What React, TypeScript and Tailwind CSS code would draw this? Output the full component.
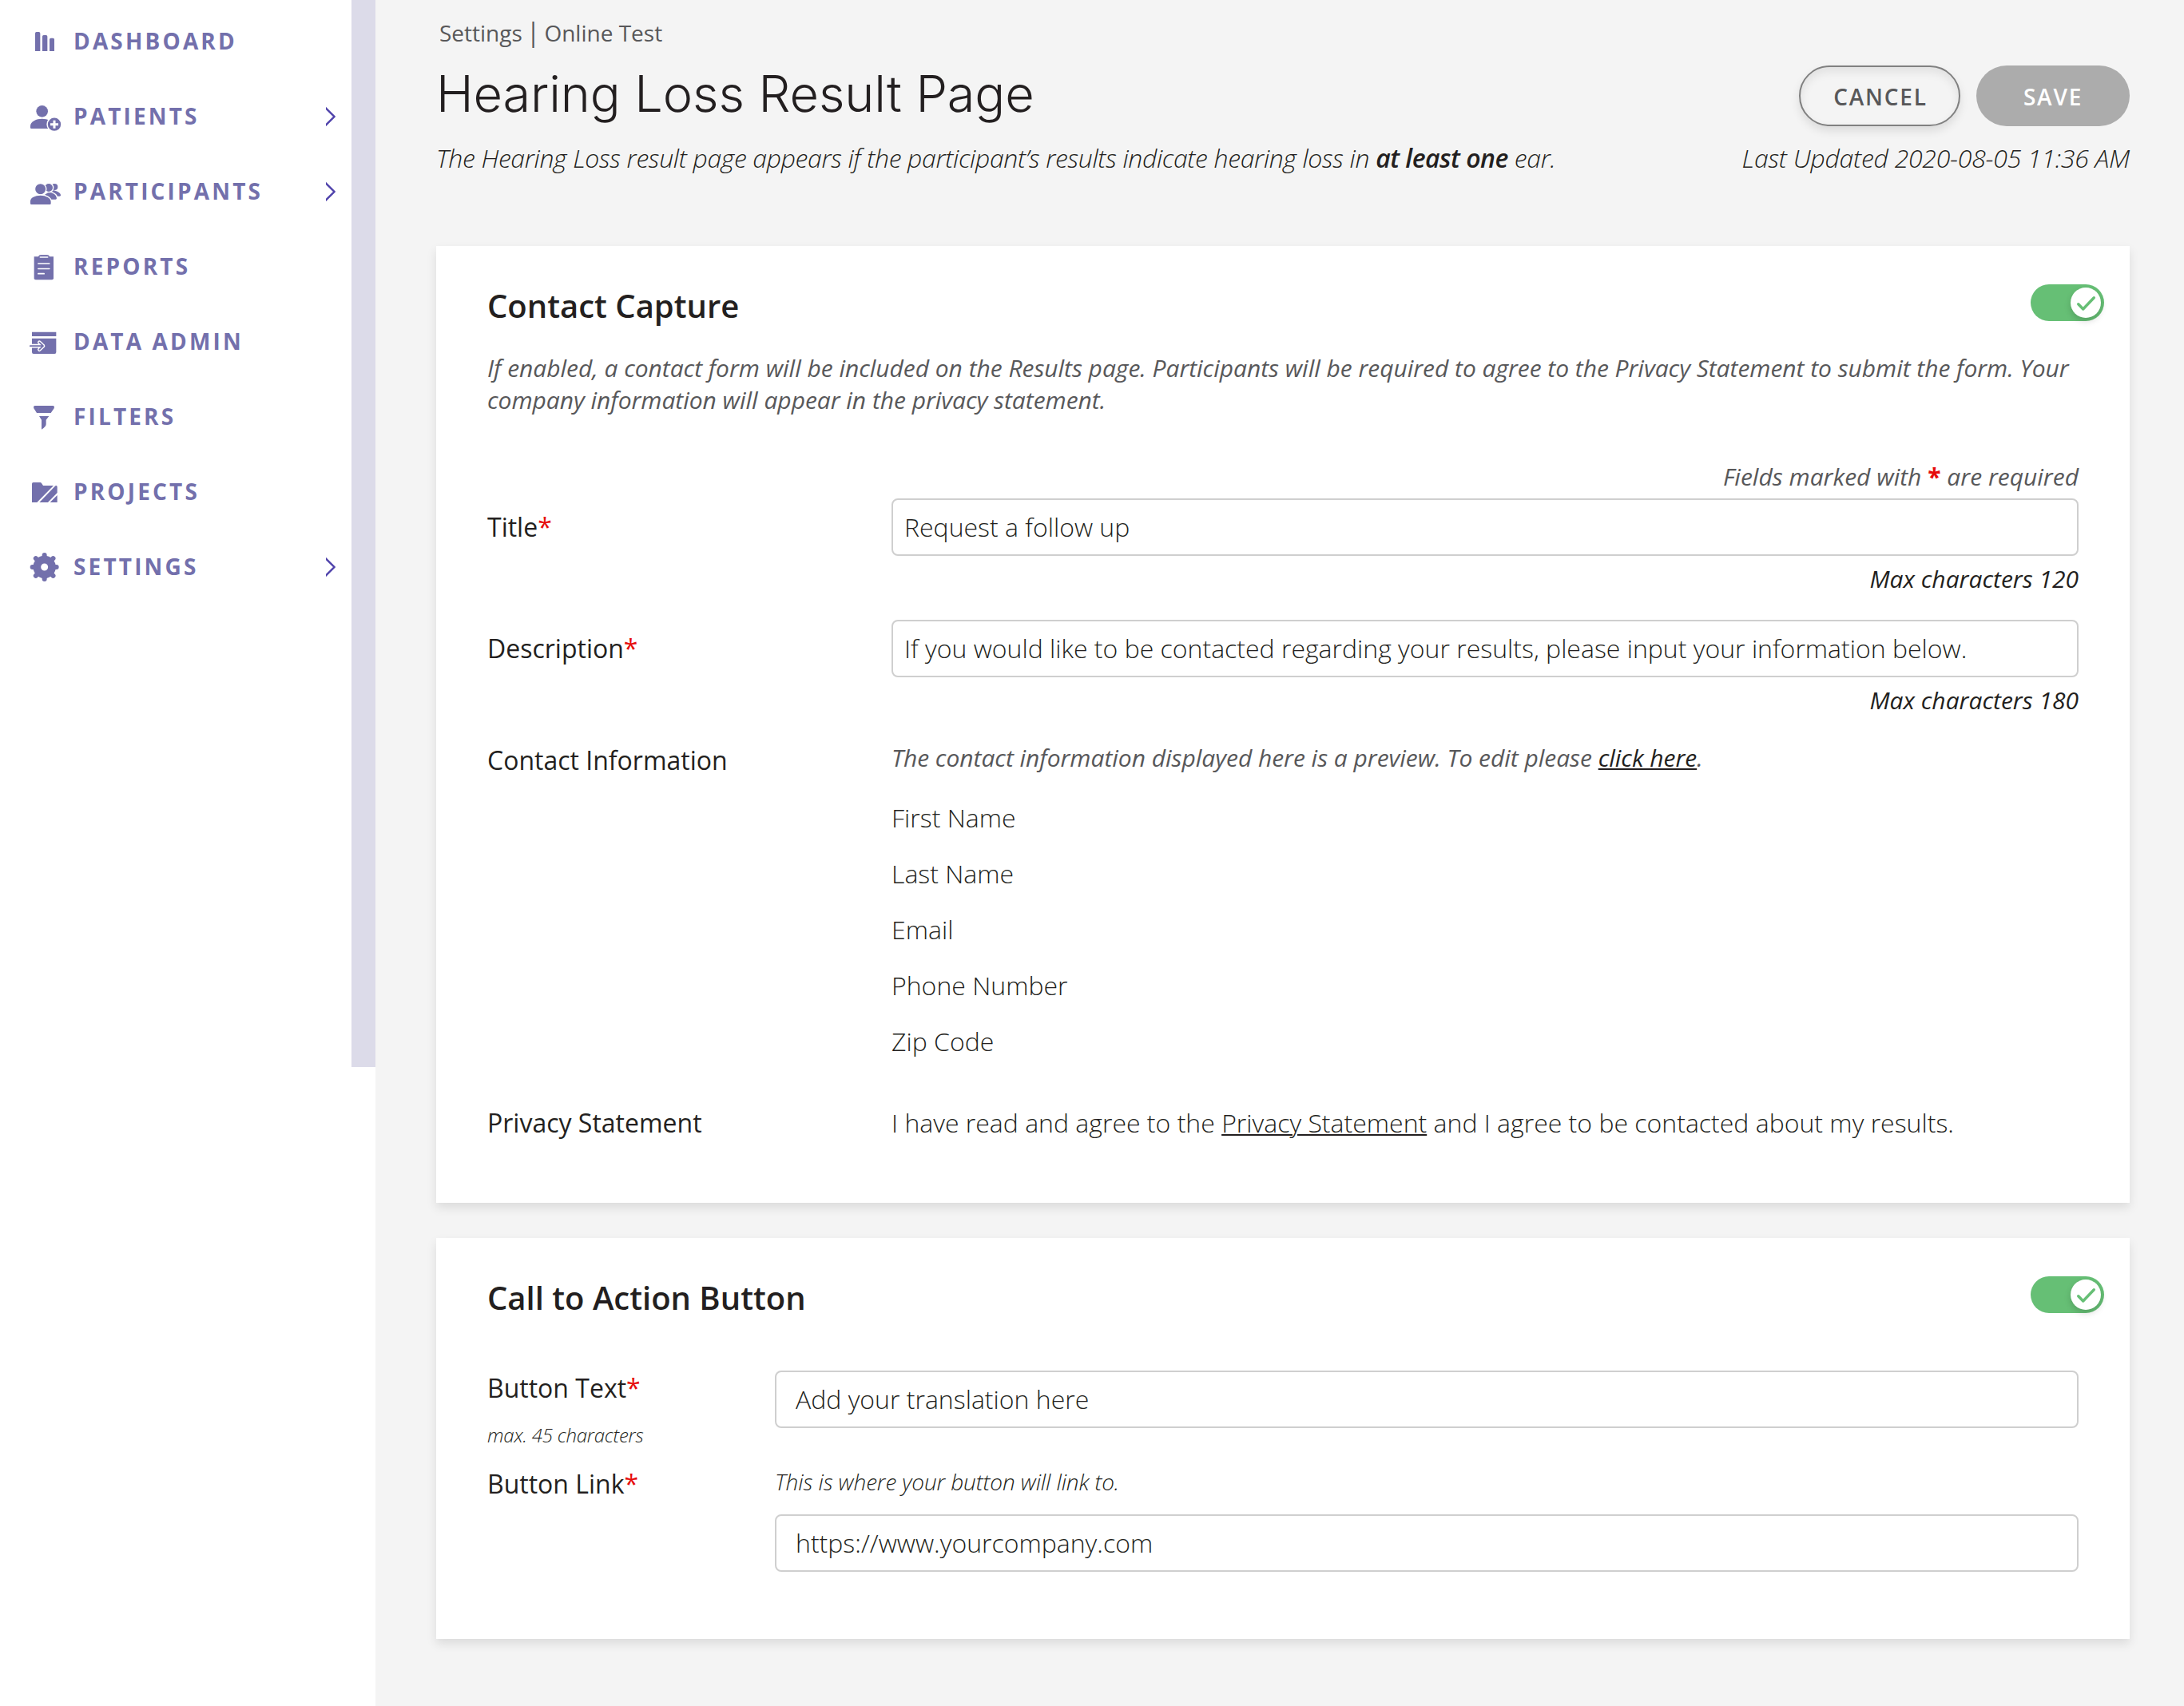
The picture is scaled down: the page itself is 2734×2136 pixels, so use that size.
import type { ReactNode } from "react";

const iconClass = "h-[42px] w-[42px] shrink-0";

const DashboardIcon = () => (
  <svg className={iconClass} viewBox="105 90 126 126" fill="currentColor">
    <path d="M132 192V125q0-5 5-5h9q5 0 5 5v67zM159 192v-55q0-5 5-5h9q5 0 5 5v55zM186 192v-44q0-5 5-5h8q5 0 5 5v44z" />
  </svg>
);

const PatientsIcon = () => (
  <svg className={iconClass} viewBox="105 372 126 126" fill="currentColor">
    <circle cx="158" cy="418" r="22" />
    <path d="M118 483q-4 0-4-4v-6c0-17 23-27 44-27s42 10 42 27v10z" />
    <circle cx="204" cy="467" r="29" fill="white" />
    <circle cx="204" cy="467" r="24.500" />
    <path d="M189 467h30M204 452v30" stroke="white" strokeWidth="9" />
  </svg>
);

const ParticipantsIcon = () => (
  <svg className={iconClass} viewBox="105 654 126 126" fill="currentColor">
    <circle cx="205" cy="702" r="12" />
    <path d="M192 714c18 0 36 10 36 19q0 4-4 4h-20z" />
    <g stroke="white" strokeWidth="4">
      <path d="M164 732l18-12c18 0 33 12 33 24q0 7-6 7h-20z" />
      <circle cx="183" cy="705" r="17" />
      <circle cx="152" cy="710" r="21.500" />
      <path d="M112 764v-8c0-15 19-24 40-24s41 10 41 26v6q0 6-6 6h-69q-6 0-6-6z" />
    </g>
  </svg>
);

const ReportsIcon = () => (
  <svg className={iconClass} viewBox="105 936 126 126" fill="currentColor">
    <path d="M128 964h73v81q0 6-6 6h-61q-6 0-6-6z" />
    <path d="M146 970v-6q0-5 5-5h28q5 0 5 5v6z" stroke="currentColor" strokeWidth="3" />
    <path d="M151 966h28" stroke="white" strokeWidth="5" strokeLinecap="round" />
    <path d="M143.500 990h42M143.500 1009.500h42M143.500 1028h22" stroke="white" strokeWidth="5" strokeLinecap="round" />
  </svg>
);

const DataAdminIcon = () => (
  <svg className={iconClass} viewBox="105 78 126 126" fill="currentColor">
    <path d="M120 107h91v16h-91zM120 131h91v52q0 6-6 6h-79q-6 0-6-6z" />
    <g fill="none" strokeLinecap="round" strokeLinejoin="round">
      <path d="M113.500 159.500H162M148 146l14 13.500L148 173" stroke="white" strokeWidth="14" />
      <path d="M113.500 159.500H160M148 146l14 13.500L148 173" stroke="currentColor" strokeWidth="5.500" />
    </g>
  </svg>
);

const FiltersIcon = () => (
  <svg className={iconClass} viewBox="105 360 126 126" fill="currentColor">
    <path d="M126 389q0-5 5-5h68q5 0 5 5l-1 5-12 17h-53l-11-17zM147 423h37l-11 14v17q0 9-17 19v-36z" />
  </svg>
);

const ProjectsIcon = () => (
  <svg className={iconClass} viewBox="105 642 126 126" fill="currentColor">
    <path d="M120 677q0-5 5-5h26q3 0 5 3l6 9h39l-62 63h-19zM148 747l60-62q7-3 7 4v22l-35 36zM188 747l27-27v27z" />
  </svg>
);

const SettingsIcon = () => (
  <svg className={iconClass} viewBox="105 924 126 126" fill="none" stroke="currentColor">
    <circle cx="167" cy="990" r="28" strokeWidth="29" />
    <path
      d="M167 955v-10M167 1025v10M132 990h-10M202 990h10M142 965l-7.500-7.500M192 965l7.500-7.500M142 1015l-7.500 7.500M192 1015l7.500 7.500"
      strokeWidth="18"
      strokeLinecap="round"
    />
  </svg>
);

const Chevron = () => (
  <svg className="mt-[2px] h-6 w-3" viewBox="0 0 12 24" fill="none" stroke="#4f42ab" strokeWidth="2.4">
    <path d="M-1 0.500L10.500 12L-1 23.500" />
  </svg>
);

const NAV: { label: string; icon: () => ReactNode; more?: boolean }[] = [
  { label: "DASHBOARD", icon: DashboardIcon },
  { label: "PATIENTS", icon: PatientsIcon, more: true },
  { label: "PARTICIPANTS", icon: ParticipantsIcon, more: true },
  { label: "REPORTS", icon: ReportsIcon },
  { label: "DATA ADMIN", icon: DataAdminIcon },
  { label: "FILTERS", icon: FiltersIcon },
  { label: "PROJECTS", icon: ProjectsIcon },
  { label: "SETTINGS", icon: SettingsIcon, more: true },
];

function Sidebar() {
  return (
    <aside className="flex w-[470px] shrink-0 items-start bg-white">
      <nav className="flex-1 pt-1">
        {NAV.map(({ label, icon: Icon, more }) => (
          <a key={label} className="flex h-[94px] items-center pr-5 pl-[35px] text-[#7370ac]">
            <Icon />
            <span className="ml-[15px] flex-1 text-[28px] leading-[38px] font-bold tracking-[3.15px]">{label}</span>
            {more && <Chevron />}
          </a>
        ))}
      </nav>
      <div className="h-[1336px] w-[30px] bg-[#dcdbe9]" />
    </aside>
  );
}

function Toggle() {
  return (
    <button className="mt-px flex h-[46px] w-[92px] items-center justify-end rounded-full bg-[#66bf75] pr-1">
      <span className="flex h-[38px] w-[38px] rounded-full bg-white shadow-[0_4px_8px_rgba(0,0,0,0.16)]">
        <svg className="h-[38px] w-[38px]" viewBox="0 0 38 38" fill="none" stroke="#66bf75" strokeWidth="3.400" strokeLinecap="round" strokeLinejoin="round">
          <path d="M9.700 20.800L15.700 27L29.300 12.800" />
        </svg>
      </span>
    </button>
  );
}

function Card({ title, className, children }: { title: string; className: string; children: ReactNode }) {
  return (
    <section className={`bg-white px-16 pt-[47px] shadow-[0_6px_12px_rgba(0,0,0,0.1)] ${className}`}>
      <div className="-mr-8 flex items-start justify-between">
        <h2 className="text-[40px] leading-[55px] font-semibold">{title}</h2>
        <Toggle />
      </div>
      {children}
    </section>
  );
}

const Star = () => <span className="font-medium text-[#e60c0c]">*</span>;

const Field = ({ className, children }: { className: string; children: ReactNode }) => (
  <div className={`h-[72px] rounded-lg border-2 border-[#cfcfcf] bg-white pt-3 leading-[43px] font-light ${className}`}>
    {children}
  </div>
);

const CONTACT_FIELDS = ["First Name", "Last Name", "Email", "Phone Number", "Zip Code"];

export default function App() {
  return (
    <div className="flex min-h-[2136px] w-[2734px] bg-[#f4f4f4] font-['Open_Sans',sans-serif] text-[32px] leading-[43px] text-[#231f20]">
      <Sidebar />
      <main className="flex-1 pr-[68px] pl-[76px]">
        <header className="flex justify-between">
          <div className="pt-[22px]">
            <div className="ml-1 flex gap-[5px] text-[28px] leading-[38px] text-[#58585a]">
              <span>Settings</span>
              <span className="text-[32px] leading-[36px]">|</span>
              <span>Online Test</span>
            </div>
            <h1 className="mt-[19px] font-['Inter',sans-serif] text-[63px] leading-[76px] font-light tracking-[-0.1px]">
              Hearing Loss Result Page
            </h1>
            <p className="mt-[21px] font-light tracking-[-0.35px] whitespace-nowrap italic">
              The Hearing Loss result page appears if the participant’s results indicate hearing loss in{" "}
              <b className="font-semibold tracking-[-0.5px]">at least one</b> ear.
            </p>
          </div>
          <div className="flex flex-col items-end pt-[82px]">
            <div className="flex gap-5 text-[28px] font-semibold tracking-[1.8px]">
              <button className="h-[76px] w-[202px] rounded-full border-2 border-[#808080] pt-[2px] pl-[2px] text-[#58585a] shadow-[0_6px_12px_rgba(0,0,0,0.1),inset_0_6px_12px_rgba(0,0,0,0.08)]">
                CANCEL
              </button>
              <button className="h-[76px] w-[192px] rounded-full bg-[#acacac] pt-[2px] text-white">SAVE</button>
            </div>
            <p className="mt-[18px] font-light tracking-[-0.25px] italic">Last Updated 2020-08-05 11:36 AM</p>
          </div>
        </header>

        <Card title="Contact Capture" className="mt-[89px] pb-[79px]">
          <p className="mt-[30px] pt-px text-[30px] leading-10 tracking-[-0.035px] text-[#58585a] italic">
            If enabled, a contact form will be included on the Results page. Participants will be required to agree to the
            Privacy Statement to submit the form. Your company information will appear in the privacy statement.
          </p>
          <p className="mt-[55px] text-right text-[30px] leading-[41px] text-[#58585a] italic">
            Fields marked with <b className="font-bold text-[#e60c0c] not-italic">*</b> are required
          </p>
          <div className="mt-[7px] grid grid-cols-[506px_1fr]">
            <label className="mt-[14px]">
              Title
              <Star />
            </label>
            <div>
              <Field className="px-[14px]">Request a follow up</Field>
              <p className="mt-2 text-right text-[30px] leading-[41px] italic">Max characters 120</p>
            </div>
            <label className="mt-[45px]">
              Description
              <Star />
            </label>
            <div className="mt-[31px]">
              <Field className="px-[14px]">
                If you would like to be contacted regarding your results, please input your information below.
              </Field>
              <p className="mt-2 text-right text-[30px] leading-[41px] italic">Max characters 180</p>
            </div>
            <div className="mt-[33px]">Contact Information</div>
            <div className="mt-[31px]">
              <p className="text-[30px] leading-[41px] tracking-[-0.03px] text-[#58585a] italic">
                The contact information displayed here is a preview. To edit please{" "}
                <a className="text-[#231f20] underline decoration-2 underline-offset-[2px] [text-decoration-skip-ink:none]">click here</a>.
              </p>
              <ul className="mt-[33px] flex flex-col gap-[27px] font-light">
                {CONTACT_FIELDS.map((name) => (
                  <li key={name}>{name}</li>
                ))}
              </ul>
            </div>
            <div className="mt-[59px]">Privacy Statement</div>
            <p className="mt-[59px] font-light">
              I have read and agree to the{" "}
              <a className="underline decoration-2 underline-offset-[2px]">Privacy Statement</a> and I agree to be contacted about my results.
            </p>
          </div>
        </Card>

        <Card title="Call to Action Button" className="mt-11 pb-[84px]">
          <div className="mt-16 grid grid-cols-[360px_1fr] gap-y-[23px]">
            <div>
              <label>
                Button Text
                <Star />
              </label>
              <p className="mt-[21px] text-[24px] leading-[33px] font-light tracking-[-0.2px] italic">max. 45 characters</p>
            </div>
            <Field className="px-6">Add your translation here</Field>
            <label>
              Button Link
              <Star />
            </label>
            <div>
              <p className="text-[28px] leading-[38px] font-light tracking-[-0.12px] italic">This is where your button will link to.</p>
              <Field className="mt-[22px] px-6">https://www.yourcompany.com</Field>
            </div>
          </div>
        </Card>
      </main>
    </div>
  );
}
